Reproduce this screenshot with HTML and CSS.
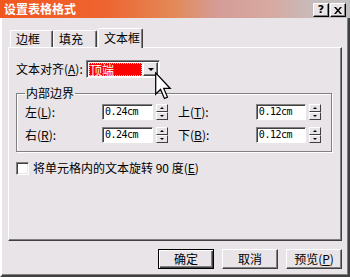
FILE: index.html
```html
<!DOCTYPE html>
<html lang="zh-CN">
<head>
    <meta charset="UTF-8">
    <title>设置表格格式</title>
    <link rel="stylesheet" href="styles.css">
</head>
<body>
    <div class="dialog">
        <div class="titlebar">
            <span class="title">设置表格格式</span>
            <div class="title-btns">
                <span class="tbtn help">?</span>
                <span class="tbtn">
                    <svg width="8" height="7" viewBox="0 0 8 7"><path d="M0 0h2l2 2.5L6 0h2L5 3.5 8 7H6L4 4.5 2 7H0l3-3.5z" fill="#000"/></svg>
                </span>
            </div>
        </div>

        <div class="body">
            <div class="tabs">
                <div class="tab first">边框</div>
                <div class="tab">填充</div>
                <div class="tab active">文本框</div>
            </div>

            <div class="panel">
                <div class="align-row">
                    <span class="label">文本对齐(<u>A</u>):</span>
                    <div class="combo">
                        <span class="combo-val">顶端</span>
                        <span class="combo-btn"><span class="tri-down"></span></span>
                    </div>
                </div>

                <fieldset class="group">
                    <legend>内部边界</legend>
                    <div class="fields">
                        <div class="field">
                            <span class="flabel">左(<u>L</u>):</span>
                            <span class="input">0.24cm</span>
                            <span class="spin"><span class="up"></span><span class="down"></span></span>
                        </div>
                        <div class="field right">
                            <span class="flabel">上(<u>T</u>):</span>
                            <span class="input">0.12cm</span>
                            <span class="spin"><span class="up"></span><span class="down"></span></span>
                        </div>
                        <div class="field">
                            <span class="flabel">右(<u>R</u>):</span>
                            <span class="input">0.24cm</span>
                            <span class="spin"><span class="up"></span><span class="down"></span></span>
                        </div>
                        <div class="field right">
                            <span class="flabel">下(<u>B</u>):</span>
                            <span class="input">0.12cm</span>
                            <span class="spin"><span class="up"></span><span class="down"></span></span>
                        </div>
                    </div>
                </fieldset>

                <div class="check">
                    <span class="box"></span>
                    <span>将单元格内的文本旋转 90 度(<u>E</u>)</span>
                </div>
            </div>

            <div class="actions">
                <button class="btn default">确定</button>
                <button class="btn">取消</button>
                <button class="btn">预览(<u>P</u>)</button>
            </div>
        </div>

        <!-- mouse pointer over the combo -->
        <svg class="cursor" width="18" height="28" viewBox="0 0 13 20">
            <path d="M0.5 0.5 L0.5 16 L4 12.5 L6.8 19 L9 18 L6.3 11.8 L11 11.8 Z" fill="#fff" stroke="#000" stroke-width="0.9" stroke-linejoin="miter"/>
        </svg>
    </div>
</body>
</html>
```

FILE: styles.css
```css
* {
    margin: 0;
    padding: 0;
    box-sizing: border-box;
}

body {
    font-family: "Noto Sans CJK SC", "DejaVu Sans", sans-serif;
    font-size: 12px;
    color: #000;
    background: #e8e4e8;
}

u {
    text-decoration: underline;
    text-underline-offset: 1px;
}

.dialog {
    position: relative;
    width: 350px;
    height: 277px;
    background: #e8e4e8;
}

/* Title bar */
.titlebar {
    height: 18px;
    display: flex;
    align-items: center;
    justify-content: space-between;
    padding: 0 4px;
    background: linear-gradient(to right, #f2561f 0%, #ee6430 30%, #e28a58 50%, #d59c96 62%, #d6aaa2 78%, #c6bcbc 90%, #c0c0c0 100%);
}

.title {
    color: #fff;
    font-weight: bold;
    font-size: 12px;
    line-height: 14px;
}

.title-btns {
    display: flex;
    gap: 1px;
    margin-top: 2px;
}

.tbtn {
    width: 16px;
    height: 14px;
    display: flex;
    align-items: center;
    justify-content: center;
    background: #e8e4e8;
    border: 1px solid;
    border-color: #fff #000 #000 #fff;
    box-shadow: inset -1px -1px 0 #808080;
    font-family: "DejaVu Sans", sans-serif;
    font-weight: bold;
    font-size: 11px;
    line-height: 12px;
}

/* Body */
.body {
    height: 259px;
    padding: 10px 6px 6px 6px;
    border-left: 2px solid #fff;
    border-right: 2px solid #404040;
    border-bottom: 2px solid #404040;
    box-shadow: inset -1px -1px 0 #808080;
}

.tabs {
    display: flex;
    align-items: flex-end;
    height: 19px;
    padding-left: 2px;
    position: relative;
    z-index: 1;
}

.tab {
    height: 17px;
    padding: 0 0 0 5px;
    line-height: 16px;
    border: 1px solid;
    border-bottom: none;
    border-color: #fff #404040 #fff #fff;
    border-radius: 2px 2px 0 0;
    box-shadow: inset -1px 0 0 #808080;
    background: #e8e4e8;
}

.tab:nth-child(1) { width: 43px; }
.tab:nth-child(2) { width: 44px; }

.tab.active {
    width: 45px;
    height: 20px;
    margin-left: 1px;
    margin-bottom: -1px;
    padding-left: 5px;
    line-height: 17px;
}

.panel {
    height: 194px;
    padding: 12px 9px 0 7px;
    border: 1px solid;
    border-color: #fff #404040 #404040 #fff;
    box-shadow: inset -1px -1px 0 #808080;
}

.align-row {
    display: flex;
    align-items: center;
    height: 18px;
}

.label {
    width: 70px;
    line-height: 14px;
}

.combo {
    display: flex;
    width: 74px;
    height: 18px;
    padding: 1px;
    background: #fff;
    border: 1px solid;
    border-color: #808080 #fff #fff #808080;
    box-shadow: inset 1px 1px 0 #404040;
}

.combo-val {
    flex: 1;
    margin: 1px 1px 0 1px;
    background: #ff0000;
    color: #fff;
    line-height: 13px;
    outline: 1px dotted #7fffff;
    outline-offset: -1px;
    padding-left: 1px;
}

.combo-btn {
    width: 15px;
    display: flex;
    align-items: center;
    justify-content: center;
    background: #e8e4e8;
    border: 1px solid;
    border-color: #fff #404040 #404040 #fff;
    box-shadow: inset -1px -1px 0 #808080;
}

.tri-down {
    border-left: 3px solid transparent;
    border-right: 3px solid transparent;
    border-top: 3px solid #000;
}

/* Group box */
.group {
    margin-top: 9px;
    padding: 0 8px 8px 8px;
    border: 1px solid #808080;
    box-shadow: inset 1px 1px 0 #fff, 1px 1px 0 #fff;
    height: 65px;
}

.group legend {
    padding: 0 1px;
    line-height: 12px;
}

.fields {
    display: grid;
    grid-template-columns: 143px 143px;
    column-gap: 10px;
    row-gap: 7px;
    margin-top: 5px;
}

.field {
    display: flex;
    align-items: center;
    height: 16px;
}

.flabel {
    width: 77px;
    line-height: 14px;
}

.field.right .flabel {
    width: 79px;
}

.input {
    width: 51px;
    height: 16px;
    padding-left: 2px;
    background: #fff;
    border: 1px solid;
    border-color: #808080 #fff #fff #808080;
    box-shadow: inset 1px 1px 0 #404040;
    font-family: "DejaVu Sans Mono", monospace;
    font-size: 10px;
    line-height: 14px;
    letter-spacing: -0.5px;
}

.spin {
    display: flex;
    flex-direction: column;
    width: 12px;
    height: 16px;
    margin-left: 3px;
}

.spin span {
    flex: 1;
    display: flex;
    align-items: center;
    justify-content: center;
    background: #e8e4e8;
    border: 1px solid;
    border-color: #fff #404040 #404040 #fff;
}

.spin .up::after {
    content: "";
    border-left: 2px solid transparent;
    border-right: 2px solid transparent;
    border-bottom: 2px solid #000;
}

.spin .down::after {
    content: "";
    border-left: 2px solid transparent;
    border-right: 2px solid transparent;
    border-top: 2px solid #000;
}

/* Checkbox */
.check {
    display: flex;
    align-items: center;
    gap: 4px;
    margin-top: 9px;
    line-height: 14px;
}

.box {
    width: 13px;
    height: 13px;
    background: #fff;
    border: 1px solid;
    border-color: #808080 #fff #fff #808080;
    box-shadow: inset 1px 1px 0 #404040, inset -1px -1px 0 #e8e4e8;
}

/* Buttons */
.actions {
    display: flex;
    justify-content: flex-end;
    gap: 8px;
    margin-top: 8px;
}

.btn {
    width: 56px;
    height: 20px;
    font-family: inherit;
    font-size: 12px;
    line-height: 14px;
    background: #e8e4e8;
    border: 1px solid;
    border-color: #fff #404040 #404040 #fff;
    box-shadow: inset -1px -1px 0 #808080;
}

.btn.default {
    border: 1px solid #000;
    box-shadow: inset 1px 1px 0 #fff, inset -1px -1px 0 #404040, inset -2px -2px 0 #808080;
}

.cursor {
    position: absolute;
    left: 155px;
    top: 72px;
}
```
